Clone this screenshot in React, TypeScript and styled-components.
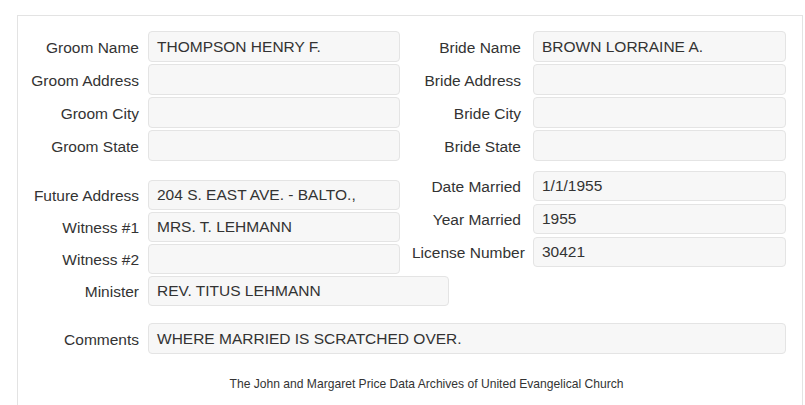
import styled, { createGlobalStyle } from 'styled-components'

const GlobalStyle = createGlobalStyle`
  html, body {
    margin: 0;
    padding: 0;
    background: #fff;
  }
  body {
    font-family: "Liberation Sans", Arial, sans-serif;
    color: #333;
  }
`

const Panel = styled.div`
  margin: 15px 0 0 17px;
  width: 784px;
  height: 374px;
  border: 1px solid #e3e3e3;
  border-bottom: none;
  padding-top: 15px;
`

const Columns = styled.div<{ $top?: number }>`
  display: grid;
  grid-template-columns: 382px 386px;
  align-items: start;
  margin-top: ${props => props.$top ?? 0}px;
`

const Column = styled.div<{ $top?: number; $gap?: number }>`
  display: flex;
  flex-direction: column;
  gap: ${props => props.$gap ?? 2}px;
  padding-top: ${props => props.$top ?? 0}px;
`

const Field = styled.div<{ $h?: number }>`
  display: flex;
  align-items: center;
  height: ${props => props.$h ?? 31}px;
`

const Label = styled.label`
  flex: none;
  width: 109px;
  margin-left: 12px;
  padding-top: 2px;
  text-align: right;
  white-space: nowrap;
  font-size: 15.5px;
  color: #333;
`

const Value = styled.div<{ $w?: number; $gap?: number }>`
  box-sizing: border-box;
  flex: none;
  display: flex;
  align-items: center;
  height: 100%;
  width: ${props => props.$w ?? 252}px;
  margin-left: ${props => props.$gap ?? 9}px;
  padding: 0 8px;
  background: #f7f7f7;
  border: 1px solid #e4e4e4;
  border-radius: 4px;
  font-size: 15.5px;
  color: #333;
  white-space: nowrap;
  overflow: hidden;
`

const CommentRow = styled(Field)`
  margin-top: 17px;
`

const Footer = styled.p`
  margin: 20px 0 0;
  padding-left: 33px;
  line-height: 20px;
  text-align: center;
  font-size: 12.1px;
  color: #333;
`

type Item = { label: string; value?: string; w?: number }

const groom: Item[] = [
  { label: 'Groom Name', value: 'THOMPSON HENRY F.' },
  { label: 'Groom Address' },
  { label: 'Groom City' },
  { label: 'Groom State' },
]

const bride: Item[] = [
  { label: 'Bride Name', value: 'BROWN LORRAINE A.' },
  { label: 'Bride Address' },
  { label: 'Bride City' },
  { label: 'Bride State' },
]

const details: Item[] = [
  { label: 'Future Address', value: '204 S. EAST AVE. - BALTO.,' },
  { label: 'Witness #1', value: 'MRS. T. LEHMANN' },
  { label: 'Witness #2' },
  { label: 'Minister', value: 'REV. TITUS LEHMANN', w: 301 },
]

const marriage: Item[] = [
  { label: 'Date Married', value: '1/1/1955' },
  { label: 'Year Married', value: '1955' },
  { label: 'License Number', value: '30421' },
]

export default function App() {
  return (
    <>
      <GlobalStyle />
      <Panel>
        <Columns>
          <Column>
            {groom.map(f => (
              <Field key={f.label}>
                <Label>{f.label}</Label>
                <Value>{f.value}</Value>
              </Field>
            ))}
          </Column>
          <Column>
            {bride.map(f => (
              <Field key={f.label}>
                <Label>{f.label}</Label>
                <Value $gap={12} $w={253}>{f.value}</Value>
              </Field>
            ))}
          </Column>
        </Columns>

        <Columns $top={10}>
          <Column $top={9}>
            {details.map(f => (
              <Field key={f.label} $h={30}>
                <Label>{f.label}</Label>
                <Value $w={f.w}>{f.value}</Value>
              </Field>
            ))}
          </Column>
          <Column $gap={3}>
            {marriage.map(f => (
              <Field key={f.label} $h={30}>
                <Label>{f.label}</Label>
                <Value $gap={12} $w={253}>{f.value}</Value>
              </Field>
            ))}
          </Column>
        </Columns>

        <CommentRow>
          <Label>Comments</Label>
          <Value $w={638}>WHERE MARRIED IS SCRATCHED OVER.</Value>
        </CommentRow>

        <Footer>The John and Margaret Price Data Archives of United Evangelical Church</Footer>
      </Panel>
    </>
  )
}
